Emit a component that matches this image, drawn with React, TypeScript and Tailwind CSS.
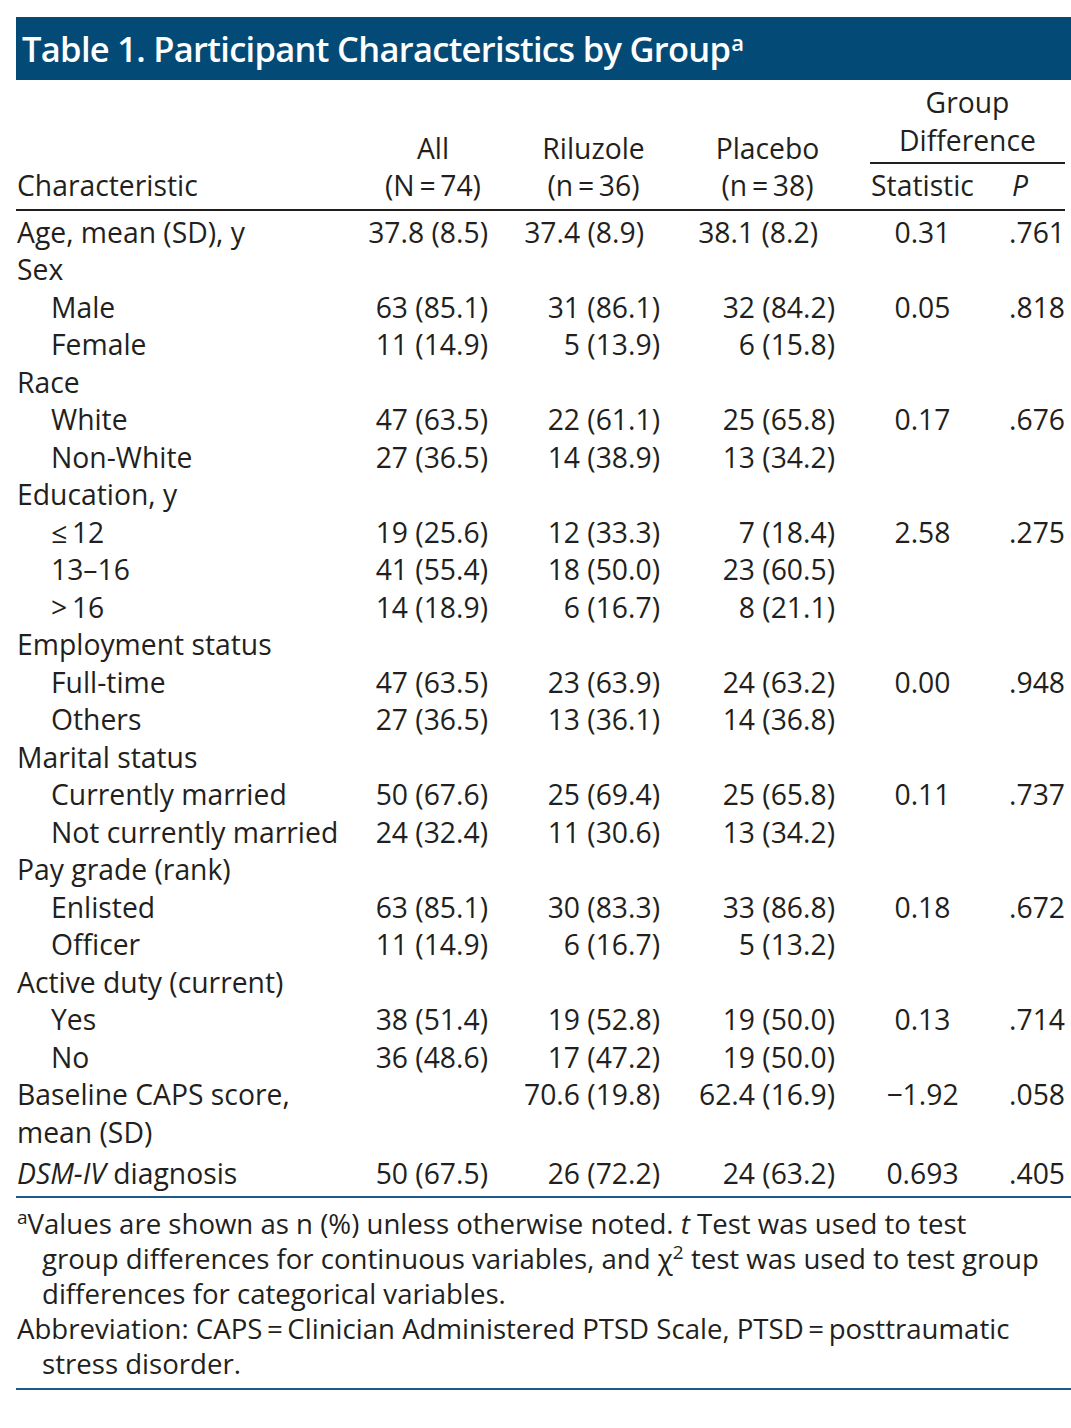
import React from "react";

type Row = {
  label: React.ReactNode;
  indent?: boolean;
  all?: string;
  ril?: string;
  plc?: string;
  stat?: string;
  p?: string;
  inset?: boolean;
};

const T = "\u2009";

const rows: Row[] = [
  { label: "Age, mean (SD), y", all: "37.8 (8.5)", ril: "37.4 (8.9)", plc: "38.1 (8.2)", stat: "0.31", p: ".761", inset: true },
  { label: "Sex" },
  { label: "Male", indent: true, all: "63 (85.1)", ril: "31 (86.1)", plc: "32 (84.2)", stat: "0.05", p: ".818" },
  { label: "Female", indent: true, all: "11 (14.9)", ril: "5 (13.9)", plc: "6 (15.8)" },
  { label: "Race" },
  { label: "White", indent: true, all: "47 (63.5)", ril: "22 (61.1)", plc: "25 (65.8)", stat: "0.17", p: ".676" },
  { label: "Non-White", indent: true, all: "27 (36.5)", ril: "14 (38.9)", plc: "13 (34.2)" },
  { label: "Education, y" },
  { label: `≤${T}12`, indent: true, all: "19 (25.6)", ril: "12 (33.3)", plc: "7 (18.4)", stat: "2.58", p: ".275" },
  { label: "13–16", indent: true, all: "41 (55.4)", ril: "18 (50.0)", plc: "23 (60.5)" },
  { label: `>${T}16`, indent: true, all: "14 (18.9)", ril: "6 (16.7)", plc: "8 (21.1)" },
  { label: "Employment status" },
  { label: "Full-time", indent: true, all: "47 (63.5)", ril: "23 (63.9)", plc: "24 (63.2)", stat: "0.00", p: ".948" },
  { label: "Others", indent: true, all: "27 (36.5)", ril: "13 (36.1)", plc: "14 (36.8)" },
  { label: "Marital status" },
  { label: "Currently married", indent: true, all: "50 (67.6)", ril: "25 (69.4)", plc: "25 (65.8)", stat: "0.11", p: ".737" },
  { label: "Not currently married", indent: true, all: "24 (32.4)", ril: "11 (30.6)", plc: "13 (34.2)" },
  { label: "Pay grade (rank)" },
  { label: "Enlisted", indent: true, all: "63 (85.1)", ril: "30 (83.3)", plc: "33 (86.8)", stat: "0.18", p: ".672" },
  { label: "Officer", indent: true, all: "11 (14.9)", ril: "6 (16.7)", plc: "5 (13.2)" },
  { label: "Active duty (current)" },
  { label: "Yes", indent: true, all: "38 (51.4)", ril: "19 (52.8)", plc: "19 (50.0)", stat: "0.13", p: ".714" },
  { label: "No", indent: true, all: "36 (48.6)", ril: "17 (47.2)", plc: "19 (50.0)" },
  {
    label: (
      <>
        Baseline CAPS score,
        <br />
        mean (SD)
      </>
    ),
    ril: "70.6 (19.8)",
    plc: "62.4 (16.9)",
    stat: "−1.92",
    p: ".058",
  },
];

const DataRow = ({ row, className = "" }: { row: Row; className?: string }) => (
  <div className={`flex items-start whitespace-nowrap leading-[37.5px] ${className}`}>
    <div className={`w-[350px] ${row.indent ? "pl-[35px]" : "pl-[1px]"}`}>{row.label}</div>
    <div className="w-[122px] text-right">{row.all}</div>
    <div className={`w-[172px] text-right ${row.inset ? "pr-[16px]" : ""}`}>{row.ril}</div>
    <div className={`w-[175px] text-right ${row.inset ? "pr-[17px]" : ""}`}>{row.plc}</div>
    <div className="w-[140px] pl-[35px] text-center">{row.stat}</div>
    <div className="w-[90px] text-right">{row.p}</div>
  </div>
);

export default function App() {
  return (
    <div
      className="min-h-[1428px] bg-white pt-[17px] text-[#231f20]"
      style={{ fontFamily: '"Open Sans", "Noto Sans", sans-serif' }}
    >
      {/* title bar */}
      <div className="ml-[16px] flex h-[63px] items-center bg-[#034a76] pl-[6px] text-white">
        <h1 className="whitespace-nowrap text-[34.5px] font-semibold tracking-[-0.7px]">
          Table 1. Participant Characteristics by Group
          <sup className="ml-[1px] text-[22px] font-semibold">a</sup>
        </h1>
      </div>

      <div className="ml-[16px] w-[1049px] text-[28.3px]">
        {/* header */}
        <div className="flex items-end whitespace-nowrap pt-[4px] pb-[4px] leading-[37.5px]">
          <div className="w-[350px] pl-[1px]">Characteristic</div>
          <div className="w-[122px] pl-[12px] text-center">
            <div>All</div>
            <div>(N{T}={T}74)</div>
          </div>
          <div className="w-[172px] pl-[39px] text-center">
            <div>Riluzole</div>
            <div>(n{T}={T}36)</div>
          </div>
          <div className="w-[175px] pl-[40px] text-center">
            <div>Placebo</div>
            <div>(n{T}={T}38)</div>
          </div>
          <div className="w-[230px] pl-[35px]">
            <div className="text-center">Group</div>
            <div className="border-b-[2px] border-[#231f20] pb-[3px] text-center">Difference</div>
            <div className="flex pt-[3px]">
              <div className="w-[105px] text-center">Statistic</div>
              <div className="w-[90px] text-center italic">P</div>
            </div>
          </div>
        </div>
        <div className="h-[2px] bg-[#231f20]" />

        {/* body */}
        <div className="pt-[3px]">
          {rows.map((row, i) => (
            <DataRow key={i} row={row} />
          ))}
          <DataRow
            className="mt-[4px]"
            row={{
              label: (
                <>
                  <i>DSM-IV</i> diagnosis
                </>
              ),
              all: "50 (67.5)",
              ril: "26 (72.2)",
              plc: "24 (63.2)",
              stat: "0.693",
              p: ".405",
            }}
          />
        </div>
      </div>

      <div className="ml-[16px] mt-[3px] h-[2px] bg-[#1d5b8c]" />

      {/* footnotes */}
      <div className="ml-[16px] w-[1049px] whitespace-nowrap pt-[8px] pb-[7px] text-[27.6px] leading-[35px]">
        <p className="pl-[26px] -indent-[25px]">
          <sup className="text-[19px]">a</sup>Values are shown as n (%) unless otherwise noted. <i>t</i> Test was used to
          test
          <br />
          group differences for continuous variables, and χ<sup className="text-[19px]">2</sup> test was used to test
          group
          <br />
          differences for categorical variables.
        </p>
        <p className="pl-[26px] -indent-[25px]">
          Abbreviation: CAPS{T}={T}Clinician Administered PTSD Scale, PTSD{T}={T}posttraumatic
          <br />
          stress disorder.
        </p>
      </div>
      <div className="ml-[16px] h-[2px] bg-[#1d5b8c]" />
    </div>
  );
}
